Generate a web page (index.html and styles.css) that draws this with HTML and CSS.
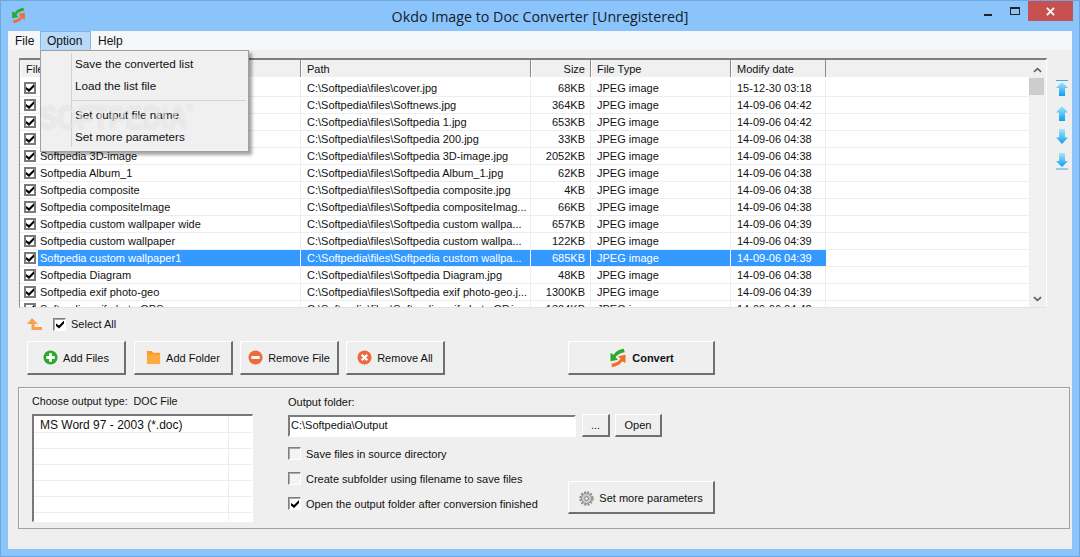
FILE: index.html
```html
<!DOCTYPE html>
<html lang="en">
<head>
<meta charset="utf-8">
<title>Okdo Image to Doc Converter</title>
<link rel="stylesheet" href="styles.css">
</head>
<body>
<div class="window">
  <header class="titlebar">
    <svg class="logo" viewBox="0 0 24 24"><path class="ic-green" d="M19 1C13 2 9 4 7 8L3 6 3 16 12 14 9 11C11 8 14 6 20 5Z"/><path class="ic-orange" d="M5 23C11 22 15 20 17 16L21 18 21 8 12 10 15 13C13 16 10 18 4 19Z"/></svg>
    <div class="title">Okdo Image to Doc Converter [Unregistered]</div>
    <div class="winctl">
      <span class="min"></span>
      <span class="max"></span>
      <span class="close"><svg viewBox="0 0 10 10" class="closex"><path d="M1 1 9 9M9 1 1 9"/></svg></span>
    </div>
  </header>
  <main class="client">
    <nav class="menubar">
      <span class="menu m-file">File</span>
      <span class="menu m-option">Option</span>
      <span class="menu m-help">Help</span>
    </nav>
    <div class="work">
      <section class="listwrap">
        <div class="list">
          <div class="table">
            <div class="row head"><span class="c1">File</span><span class="c2">Path</span><span class="c3">Size</span><span class="c4">File Type</span><span class="c5">Modify date</span></div>
            <div class="row"><span class="c0"><i class="chk"></i></span><span class="c1t">Softpedia cover</span><span class="c2">C:\Softpedia\files\cover.jpg</span><span class="c3">68KB</span><span class="c4">JPEG image</span><span class="c5">15-12-30 03:18</span></div>
            <div class="row"><span class="c0"><i class="chk"></i></span><span class="c1t">Softnews</span><span class="c2">C:\Softpedia\files\Softnews.jpg</span><span class="c3">364KB</span><span class="c4">JPEG image</span><span class="c5">14-09-06 04:42</span></div>
            <div class="row"><span class="c0"><i class="chk"></i></span><span class="c1t">Softpedia 1</span><span class="c2">C:\Softpedia\files\Softpedia 1.jpg</span><span class="c3">653KB</span><span class="c4">JPEG image</span><span class="c5">14-09-06 04:42</span></div>
            <div class="row"><span class="c0"><i class="chk"></i></span><span class="c1t">Softpedia 200</span><span class="c2">C:\Softpedia\files\Softpedia 200.jpg</span><span class="c3">33KB</span><span class="c4">JPEG image</span><span class="c5">14-09-06 04:38</span></div>
            <div class="row"><span class="c0"><i class="chk"></i></span><span class="c1t">Softpedia 3D-image</span><span class="c2">C:\Softpedia\files\Softpedia 3D-image.jpg</span><span class="c3">2052KB</span><span class="c4">JPEG image</span><span class="c5">14-09-06 04:38</span></div>
            <div class="row"><span class="c0"><i class="chk"></i></span><span class="c1t">Softpedia Album_1</span><span class="c2">C:\Softpedia\files\Softpedia Album_1.jpg</span><span class="c3">62KB</span><span class="c4">JPEG image</span><span class="c5">14-09-06 04:38</span></div>
            <div class="row"><span class="c0"><i class="chk"></i></span><span class="c1t">Softpedia composite</span><span class="c2">C:\Softpedia\files\Softpedia composite.jpg</span><span class="c3">4KB</span><span class="c4">JPEG image</span><span class="c5">14-09-06 04:38</span></div>
            <div class="row"><span class="c0"><i class="chk"></i></span><span class="c1t">Softpedia compositeImage</span><span class="c2">C:\Softpedia\files\Softpedia compositeImag...</span><span class="c3">66KB</span><span class="c4">JPEG image</span><span class="c5">14-09-06 04:38</span></div>
            <div class="row"><span class="c0"><i class="chk"></i></span><span class="c1t">Softpedia custom wallpaper wide</span><span class="c2">C:\Softpedia\files\Softpedia custom wallpa...</span><span class="c3">657KB</span><span class="c4">JPEG image</span><span class="c5">14-09-06 04:39</span></div>
            <div class="row"><span class="c0"><i class="chk"></i></span><span class="c1t">Softpedia custom wallpaper</span><span class="c2">C:\Softpedia\files\Softpedia custom wallpa...</span><span class="c3">122KB</span><span class="c4">JPEG image</span><span class="c5">14-09-06 04:39</span></div>
            <div class="row sel"><span class="c0"><i class="chk"></i></span><span class="c1t">Softpedia custom wallpaper1</span><span class="c2">C:\Softpedia\files\Softpedia custom wallpa...</span><span class="c3">685KB</span><span class="c4">JPEG image</span><span class="c5">14-09-06 04:39</span></div>
            <div class="row"><span class="c0"><i class="chk"></i></span><span class="c1t">Softpedia Diagram</span><span class="c2">C:\Softpedia\files\Softpedia Diagram.jpg</span><span class="c3">48KB</span><span class="c4">JPEG image</span><span class="c5">14-09-06 04:38</span></div>
            <div class="row"><span class="c0"><i class="chk"></i></span><span class="c1t">Softpedia exif photo-geo</span><span class="c2">C:\Softpedia\files\Softpedia exif photo-geo.j...</span><span class="c3">1300KB</span><span class="c4">JPEG image</span><span class="c5">14-09-06 04:39</span></div>
            <div class="row"><span class="c0"><i class="chk"></i></span><span class="c1t">Softpedia exif photo GPS</span><span class="c2">C:\Softpedia\files\Softpedia exif photo GP.j...</span><span class="c3">1304KB</span><span class="c4">JPEG image</span><span class="c5">14-09-06 04:42</span></div>
          </div>
          <div class="scrollbar">
            <svg class="sb-arrow" viewBox="0 0 10 6"><path d="M1 5 5 1.5 9 5"/></svg>
            <div class="thumb"></div>
            <div class="sb-fill"></div>
            <svg class="sb-arrow" viewBox="0 0 10 6"><path d="M1 1 5 4.5 9 1"/></svg>
          </div>
        </div>
        <div class="movers">
          <svg class="mv mv1" viewBox="0 0 14 17"><defs><linearGradient id="bu" x1="0" y1="0" x2="0" y2="1"><stop offset="0" stop-color="#a8e6f8"/><stop offset="1" stop-color="#0a9ff0"/></linearGradient><linearGradient id="bd" x1="0" y1="0" x2="0" y2="1"><stop offset="0" stop-color="#a8e6f8"/><stop offset="1" stop-color="#0a9ff0"/></linearGradient></defs><path class="bar" d="M1 .5H13"/><path fill="url(#bu)" d="M7 2 13 8H10V16H4V8H1Z"/></svg>
          <svg class="mv mv2" viewBox="0 0 14 15"><path fill="url(#bu)" d="M7 0 13 6.500H10V15H4V6.500H1Z"/></svg>
          <svg class="mv mv3" viewBox="0 0 14 15"><path fill="url(#bd)" d="M4 0H10V8.500H13L7 15 1 8.500H4Z"/></svg>
          <svg class="mv mv4" viewBox="0 0 14 17"><path fill="url(#bd)" d="M4 0H10V8H13L7 14 1 8H4Z"/><path class="bar" d="M1 16H13"/></svg>
        </div>
      </section>
      <div class="selectrow">
        <svg class="uparrow" viewBox="0 0 16 12"><path d="M6 0 12 6H8.500V9H16V12H5.500V6H1Z"/></svg>
        <i class="sqchk on"></i>
        <span class="sel-label">Select All</span>
      </div>
      <div class="btnrow">
        <button class="btn b-files"><svg class="ic" viewBox="0 0 16 16"><circle cx="8" cy="8" r="7.500" class="ic-green"/><path d="M6.500 3.500H9.500V6.500H12.500V9.500H9.500V12.500H6.500V9.500H3.500V6.500H6.500Z" fill="#fff"/></svg>Add Files</button>
        <button class="btn"><svg class="ic" viewBox="0 0 16 16"><path d="M1 1H6L8 3H15V15H1Z" fill="#fb9a2e"/><path d="M1 5H15V15H1Z" fill="#fdaa3e"/></svg>Add Folder</button>
        <button class="btn"><svg class="ic" viewBox="0 0 16 16"><circle cx="8" cy="8" r="7.500" fill="#ec6a3c"/><path d="M3.500 6.500H12.500V9.500H3.500Z" fill="#fff"/></svg>Remove File</button>
        <button class="btn"><svg class="ic" viewBox="0 0 16 16"><circle cx="8" cy="8" r="7.500" fill="#ec6a3c"/><path d="M5 5 11 11M11 5 5 11" stroke="#fff" stroke-width="2.400"/></svg>Remove All</button>
        <button class="btn convert"><svg class="ic-lg" viewBox="0 0 24 24"><path class="ic-green" d="M19 1C13 2 9 4 7 8L3 6 3 16 12 14 9 11C11 8 14 6 20 5Z"/><path class="ic-orange" d="M5 23C11 22 15 20 17 16L21 18 21 8 12 10 15 13C13 16 10 18 4 19Z"/></svg>Convert</button>
      </div>
      <section class="panel">
        <div class="p-left">
          <div class="p-label type-label">Choose output type:&nbsp; DOC File</div>
          <div class="typelist">
            <div class="t-row"><span class="t-a first">MS Word 97 - 2003 (*.doc)</span><span class="t-b"></span></div>
            <div class="t-row"><span class="t-a"></span><span class="t-b"></span></div>
            <div class="t-row"><span class="t-a"></span><span class="t-b"></span></div>
            <div class="t-row"><span class="t-a"></span><span class="t-b"></span></div>
            <div class="t-row"><span class="t-a"></span><span class="t-b"></span></div>
            <div class="t-row"><span class="t-a"></span><span class="t-b"></span></div>
            <div class="t-row"><span class="t-a"></span><span class="t-b"></span></div>
          </div>
        </div>
        <div class="p-right">
          <div class="p-label out-label">Output folder:</div>
          <div class="folder-row">
            <div class="input">C:\Softpedia\Output</div>
            <button class="btn small dots">...</button>
            <button class="btn small open">Open</button>
          </div>
          <div class="opts">
            <div class="checks">
              <label class="opt"><i class="sqchk"></i>Save files in source directory</label>
              <label class="opt"><i class="sqchk"></i>Create subfolder using filename to save files</label>
              <label class="opt"><i class="sqchk on"></i>Open the output folder after conversion finished</label>
            </div>
            <button class="btn params"><svg class="ic" viewBox="0 0 16 16"><circle cx="8" cy="8" r="5.500" fill="#c9c9c9" stroke="#8a8a8a"/><circle cx="8" cy="8" r="6.700" fill="none" stroke="#8f8f8f" stroke-width="2" stroke-dasharray="2.200 1.300"/><circle cx="8" cy="8" r="2" fill="#efefef" stroke="#777"/></svg>Set more parameters</button>
          </div>
        </div>
      </section>
    </div>
  </main>
  <div class="dropdown">
    <div class="dd-item">Save the converted list</div>
    <div class="dd-item">Load the list file</div>
    <div class="dd-sep"></div>
    <div class="dd-item">Set output file name</div>
    <div class="dd-item">Set more parameters</div>
  </div>
  <div class="watermark">SOFTPEDIA<sup>®</sup></div>
</div>
</body>
</html>
```
FILE: styles.css
```css
* { box-sizing: border-box; }
html, body { margin: 0; padding: 0; }
body { width: 1080px; height: 557px; overflow: hidden; font-family: "Liberation Sans", Arial, sans-serif; font-size: 11px; color: #111; }

.window { position: relative; width: 1080px; height: 557px; background: #8ac4fa; border: 1px solid #6fa6dc; padding: 0 7px 7px; display: flex; flex-direction: column; }

.titlebar { position: relative; height: 30px; flex: none; display: flex; align-items: center; justify-content: center; }
.logo { position: absolute; left: 2px; top: 6px; width: 17px; height: 17px; }
.ic-green { fill: #2ba82f; }
.ic-orange { fill: #f0702a; }
.title { font-family: "Open Sans", sans-serif; font-size: 14.250px; color: #10202e; }
.winctl { position: absolute; right: -1px; top: 0; display: flex; align-items: flex-start; }
.min { width: 8px; height: 2px; background: #222; margin: 13px 18px 0 0; }
.max { width: 10px; height: 8px; border: 1px solid #222; border-top-width: 2px; margin: 6px 8px 0 0; }
.close { width: 45px; height: 20px; background: #c75050; display: flex; align-items: center; justify-content: center; }
.closex { width: 9px; height: 9px; }
.closex path { stroke: #fff; stroke-width: 2; fill: none; }

.client { flex: 1; background: #efefef; display: flex; flex-direction: column; min-height: 0; }
.menubar { height: 19px; flex: none; background: #f5f6f7; display: flex; font-size: 12px; }
.menu { display: flex; align-items: center; height: 19px; }
.m-file { padding-left: 7px; width: 32px; }
.m-option { width: 51px; padding-left: 6px; background: #b9d9f8; border: 1px solid #7fb6ea; border-bottom-color: #b9d9f8; }
.m-help { padding-left: 7px; }

.work { flex: 1; padding: 8px 0 0 11px; display: flex; flex-direction: column; min-height: 0; }

.listwrap { display: flex; height: 250px; flex: none; }
.list { width: 1028px; height: 250px; flex: none; display: flex; border: 1px solid; border-color: #7d7d7d #fff #e2e2e2 #8d8d8d; border-top-width: 2px; overflow: hidden; background: #fff; }
.table { flex: 1; min-width: 0; overflow: hidden; background: #fff; }
.row { display: flex; height: 17px; border-bottom: 1px solid #eeeeee; align-items: center; white-space: nowrap; }
.row span { display: block; height: 16px; line-height: 16px; border-right: 1px solid #eeeeee; overflow: hidden; flex: none; }
.c0 { width: 18px; padding: 2px 0 0 4px; border-right: 0 !important; }
.c1t { width: 263px; padding-left: 2px; }
.c1 { width: 281px; padding-left: 6px; }
.c2 { width: 230px; padding-left: 6px; }
.c3 { width: 60px; padding-right: 5px; text-align: right; }
.c4 { width: 140px; padding-left: 6px; }
.c5 { width: 95px; padding-left: 6px; }

.head { height: 19px; background: #f0f0f0; border-bottom: 2px solid; border-image: linear-gradient(#7a7a7a 50%, #fff 50%) 1; align-items: stretch; margin-bottom: 1px; }
.head span { height: 17px; line-height: 18px; border-right: 1px solid #8a8a8a; box-shadow: inset 1px 0 0 #fff; background: #f0f0f0; }

.sel .c1t, .sel .c2, .sel .c3, .sel .c4, .sel .c5 { background: #3399ff; color: #fff; border-right-color: #fff; }
.sel .c5 { border-right-color: #3399ff; }

.chk { display: block; width: 12px; height: 12px; border: 2px solid #7b7b7b; background: #fff; position: relative; }
.chk::after, .sqchk.on::after { content: ""; position: absolute; left: 0; top: 0; width: 8px; height: 8px; background: #000; clip-path: polygon(0 3px, 3px 5px, 8px 0, 8px 3px, 3px 8px, 0 5.500px); }

.scrollbar { width: 17px; flex: none; background: #f0f0f0; display: flex; flex-direction: column; align-items: center; }
.sb-arrow { width: 9px; height: 6px; margin: 7px 0 5px; flex: none; }
.sb-arrow path { fill: none; stroke: #606060; stroke-width: 1.800; }
.thumb { width: 15px; height: 17px; margin-right: 2px; background: #cdcdcd; flex: none; }
.sb-fill { flex: 1; }

.movers { width: 25px; flex: none; padding: 22px 0 0 8px; display: flex; flex-direction: column; }
.mv { width: 14px; flex: none; display: block; }
.mv1 { height: 17px; margin-bottom: 9px; }
.mv2 { height: 15px; margin-bottom: 8px; }
.mv3 { height: 15px; margin-bottom: 9px; }
.mv4 { height: 17px; }
.bar { stroke: #3fa9e6; stroke-width: 1; fill: none; }

.selectrow { height: 16px; margin-top: 8px; padding-left: 7px; display: flex; align-items: center; flex: none; }
.uparrow { width: 16px; height: 12px; fill: #f9a04a; margin-right: 11px; }
.sqchk { display: block; position: relative; flex: none; width: 13px; height: 13px; background: #f4f4f4; border: 1px solid; border-color: #7f7f7f #fff #fff #7f7f7f; box-shadow: inset 1px 1px 0 #a8a8a8; }
.sqchk.on { background: #fff; }
.sqchk.on::after { left: 2px; top: 2px; }
.sel-label { margin-left: 5px; }

.btnrow { display: flex; gap: 7px; padding-left: 8px; margin-top: 9px; flex: none; }
.btn { display: flex; align-items: center; justify-content: center; gap: 5px; width: 99px; height: 34px; padding: 0; background: #efefef; border: 2px solid; border-color: #fff #6f6f6f #6f6f6f #fff; border-width: 1px 2px 2px 1px; font: 11px "Liberation Sans", Arial, sans-serif; color: #111; }
.b-files { margin-right: 1px; }
.ic { width: 15px; height: 15px; flex: none; }
.ic-lg { width: 20px; height: 20px; flex: none; }
.convert { width: 147px; margin-left: 116px; font-weight: bold; gap: 4px; }

.panel { height: 142px; margin-top: 12px; margin-left: -1px; width: 1052px; flex: none; border: 1px solid #a0a0a0; box-shadow: inset 1px 1px 0 #f8f8f8; padding: 6px 13px 0; display: flex; gap: 35px; }
.p-left { width: 221px; flex: none; }
.p-label { height: 14px; line-height: 14px; }
.type-label { font-size: 10.700px; }
.typelist { margin-top: 6px; width: 221px; height: 108px; border: 2px solid; border-color: #787878 #fff #fff #787878; border-width: 2px 1px 1px 2px; background: #fff; overflow: hidden; }
.t-row { display: flex; height: 16px; border-bottom: 1px solid #eeeeee; }
.t-row:first-child { height: 17px; }
.t-a { width: 195px; padding-left: 6px; border-right: 1px solid #eeeeee; font-size: 12px; line-height: 19px; }
.t-b { flex: 1; }

.p-right { flex: 1; min-width: 0; }
.out-label { margin-top: 1px; }
.folder-row { display: flex; margin-top: 5px; align-items: flex-start; gap: 6px; }
.input { width: 288px; height: 22px; margin-top: 1px; background: #fff; border: 2px solid; border-color: #7d7d7d #fff #fff #7d7d7d; padding-left: 1px; line-height: 16px; }
.small { height: 23px; }
.dots { width: 28px; }
.open { width: 47px; margin-left: -1px; }

.opts { display: flex; margin-top: 10px; align-items: flex-end; }
.checks { width: 280px; flex: none; display: flex; flex-direction: column; gap: 12px; }
.opt { display: flex; align-items: center; gap: 5px; height: 13px; white-space: nowrap; }
.params { width: 147px; height: 33px; margin-bottom: -4px; padding-top: 2px; }

.dropdown { position: absolute; left: 39px; top: 49px; width: 209px; height: 102px; background: #f0f0f0; border: 1px solid #a0a0a0; box-shadow: 3px 3px 3px rgba(0,0,0,.35); padding: 2px 0 0 34px; font-size: 11.700px; z-index: 2; }
.dropdown::before { content: ""; position: absolute; left: 30px; top: 2px; bottom: 4px; width: 1px; background: #d4d4d4; }
.dd-item { height: 22px; line-height: 22px; }
.dd-sep { height: 1px; margin: 3px 2px 3px -4px; background: #d4d4d4; }

.watermark { position: absolute; left: 39px; top: 99px; z-index: 3; font-family: "Liberation Sans", sans-serif; font-size: 33px; font-weight: bold; line-height: 36px; white-space: nowrap; transform: scaleX(.78); transform-origin: left center; color: rgba(255,255,255,.55); text-shadow: 0 0 2px rgba(0,0,0,.14); pointer-events: none; }
.watermark sup { font-size: 10px; font-weight: normal; vertical-align: 18px; line-height: 0; }
```
